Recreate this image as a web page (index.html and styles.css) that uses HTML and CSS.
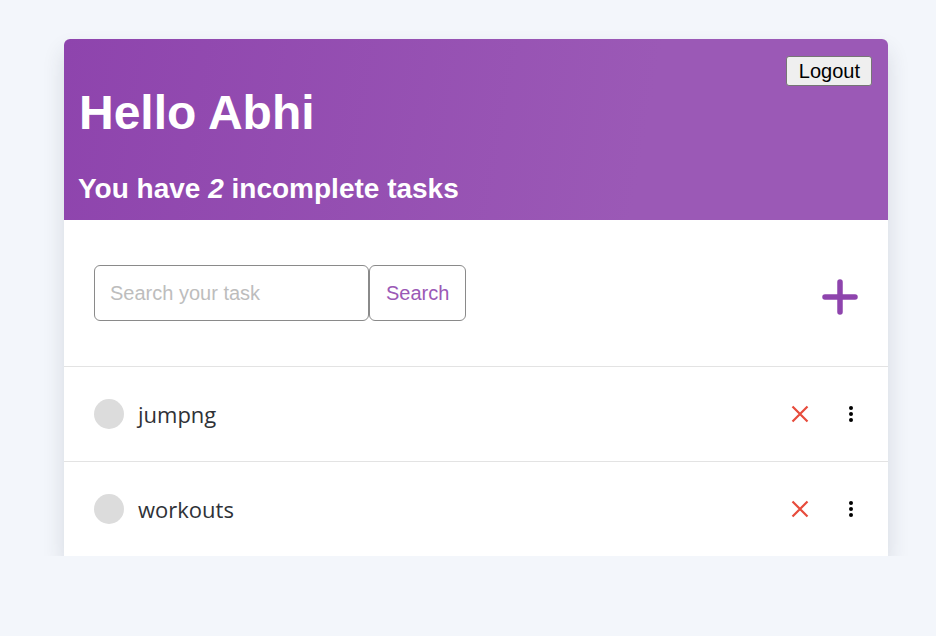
FILE: index.html
```html
<!DOCTYPE html>
<html lang="en">
<head>
<meta charset="utf-8">
<title>Todo</title>
<link rel="stylesheet" href="styles.css">
</head>
<body>
<main class="card">
  <header class="header">
    <button class="logout">Logout</button>
    <h1 class="title">Hello Abhi</h1>
    <h2 class="subtitle">You have <em>2</em> incomplete tasks</h2>
  </header>
  <section class="toolbar">
    <form class="search">
      <input class="search-input" type="text" placeholder="Search your task">
      <button class="search-btn" type="button">Search</button>
    </form>
    <button class="add" type="button" aria-label="Add task">
      <svg width="38" height="38" viewBox="0 0 38 38"><path d="M19 4v30M4 19h30" stroke="#8e44ad" stroke-width="5.5" stroke-linecap="round" fill="none"/></svg>
    </button>
  </section>
  <ul class="tasks">
    <li class="task">
      <span class="check"></span>
      <span class="task-name">jumpng</span>
      <span class="delete"><svg width="18" height="18" viewBox="0 0 18 18"><path d="M1.5 1.5l15 15M16.5 1.5l-15 15" stroke="#e74c3c" stroke-width="2.2" fill="none"/></svg></span>
      <span class="more"><i></i><i></i><i></i></span>
    </li>
    <li class="task">
      <span class="check"></span>
      <span class="task-name">workouts</span>
      <span class="delete"><svg width="18" height="18" viewBox="0 0 18 18"><path d="M1.5 1.5l15 15M16.5 1.5l-15 15" stroke="#e74c3c" stroke-width="2.2" fill="none"/></svg></span>
      <span class="more"><i></i><i></i><i></i></span>
    </li>
  </ul>
</main>
</body>
</html>
```

FILE: styles.css
```css
* { box-sizing: border-box; }
html, body { margin: 0; padding: 0; }
body {
  background: #f3f6fb;
  font-family: "Liberation Sans", Arial, sans-serif;
  padding-top: 39px;
  padding-left: 64px;
}
.card {
  width: 824px;
  background: #fff;
  border-radius: 6px 6px 0 0;
  box-shadow: 0 12px 22px rgba(40, 50, 70, 0.14);
}
.header {
  position: relative;
  background: linear-gradient(100deg, #8e44ad 0%, #9b59b6 70%, #9b59b6 100%);
  border-radius: 6px 6px 0 0;
  padding: 46px 15px 15px 14px;
  color: #fff;
  height: 181px;
}
.logout {
  position: absolute;
  top: 17px;
  right: 16px;
  height: 30px;
  padding: 0 11px 0 12px;
  font-family: "Liberation Sans", Arial, sans-serif;
  font-size: 20px;
  color: #000;
  background: #efefef;
  border: 1px solid #767676;
  border-radius: 3px;
}
.title {
  margin: 0 0 0 1px;
  font-size: 48px;
  line-height: 55px;
  font-weight: bold;
}
.subtitle {
  margin: 33px 0 0;
  font-size: 28px;
  line-height: 32px;
  font-weight: bold;
}
.subtitle em { font-style: italic; }
.toolbar {
  display: flex;
  align-items: center;
  justify-content: space-between;
  height: 147px;
  padding: 0 29px 0 30px;
  border-bottom: 1px solid #e3e3e3;
}
.search { display: flex; margin: 0; }
.search-input {
  width: 275px;
  height: 56px;
  padding: 0 15px;
  font-family: "Liberation Sans", Arial, sans-serif;
  font-size: 20px;
  border: 1px solid #8a8a8a;
  border-radius: 6px;
  outline: none;
}
.search-input::placeholder { color: #bdbdbd; }
.search-btn {
  height: 56px;
  padding: 0 16px;
  background: #fff;
  color: #9b59b6;
  font-family: "Liberation Sans", Arial, sans-serif;
  font-size: 20px;
  border: 1px solid #8a8a8a;
  border-radius: 6px;
}
.add {
  background: none;
  border: 0;
  padding: 0;
  display: flex;
  margin-top: 8px;
}
.tasks { list-style: none; margin: 0; padding: 0; }
.task {
  display: flex;
  align-items: center;
  height: 95px;
  padding: 0 35px 0 30px;
  border-top: 1px solid #e3e3e3;
}
.task:first-child { border-top: 0; height: 94px; }
.check {
  width: 30px;
  height: 30px;
  border-radius: 50%;
  background: #dcdcdc;
  flex: none;
}
.task-name {
  flex: 1;
  margin-left: 14px;
  font-family: "Open Sans", "Noto Sans", sans-serif;
  font-size: 22px;
  color: #2f3237;
}
.delete { display: flex; margin-right: 40px; }
.more {
  display: flex;
  flex-direction: column;
  gap: 2px;
  width: 4px;
}
.more i {
  width: 4px;
  height: 4px;
  border-radius: 50%;
  background: #000;
}
```
